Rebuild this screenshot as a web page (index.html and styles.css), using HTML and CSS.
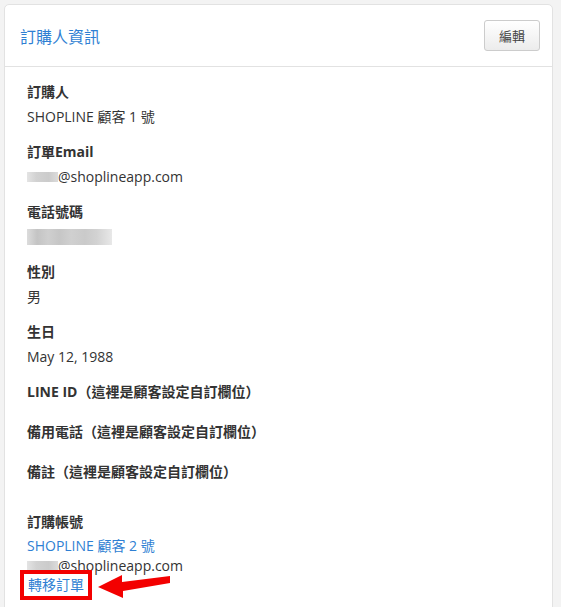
FILE: index.html
```html
<!DOCTYPE html>
<html lang="zh-Hant">
  <head>
    <meta charset="utf-8">
    <title>訂購人資訊</title>
    <link rel="stylesheet" href="styles.css">
  </head>
  <body>
    <div class="panel">
      <div class="panel-heading">
        <h3 class="panel-title">訂購人資訊</h3>
        <button class="btn">編輯</button>
      </div>
      <div class="panel-body">
        <div class="field">
          <div class="field-label">訂購人</div>
          <div class="field-value">SHOPLINE 顧客 1 號</div>
        </div>
        <div class="field">
          <div class="field-label">訂單Email</div>
          <div class="field-value"><span class="blur blur-mail"></span>@shoplineapp.com</div>
        </div>
        <div class="field">
          <div class="field-label">電話號碼</div>
          <div class="field-value"><span class="blur blur-phone"></span></div>
        </div>
        <div class="field">
          <div class="field-label">性別</div>
          <div class="field-value">男</div>
        </div>
        <div class="field">
          <div class="field-label">生日</div>
          <div class="field-value">May 12, 1988</div>
        </div>
        <div class="field">
          <div class="field-label">LINE ID（這裡是顧客設定自訂欄位）</div>
        </div>
        <div class="field">
          <div class="field-label">備用電話（這裡是顧客設定自訂欄位）</div>
        </div>
        <div class="field">
          <div class="field-label">備註（這裡是顧客設定自訂欄位）</div>
        </div>
        <div class="field field-account">
          <div class="field-label">訂購帳號</div>
          <div class="field-value"><a href="#">SHOPLINE 顧客 2 號</a></div>
          <div class="field-value"><span class="blur blur-mail"></span>@shoplineapp.com</div>
          <div class="field-action">
            <a href="#" class="highlight">轉移訂單</a>
          </div>
        </div>
      </div>
    </div>
    <svg class="arrow" width="90" height="40" viewBox="0 0 90 40">
      <polygon points="0,22 24,10 24,17 72,11 72,18 25,26 25,33" fill="#f30000"/>
    </svg>
  </body>
</html>
```

FILE: styles.css
```css
html, body {
  margin: 0;
  height: 100%;
}

body {
  background: #f3f3f3;
  font-family: "Open Sans", "Noto Sans CJK TC", sans-serif;
  font-size: 14px;
  color: #333;
  padding: 4px 0 0 4px;
  box-sizing: border-box;
  overflow: hidden;
}

a {
  color: #2f7fd3;
  text-decoration: none;
}

.panel {
  width: 549px;
  height: 700px;
  background: #fff;
  border: 1px solid #e2e2e2;
  border-radius: 5px;
  box-sizing: border-box;
}

.panel-heading {
  height: 61px;
  display: flex;
  align-items: center;
  justify-content: space-between;
  padding: 0 12px 0 15px;
  border-bottom: 1px solid #e2e2e2;
}

.panel-title {
  margin: 0;
  font-size: 16px;
  font-weight: normal;
  color: #2f7fd3;
}

.btn {
  width: 56px;
  height: 31px;
  font-family: inherit;
  font-size: 13px;
  color: #444;
  background: linear-gradient(#fff, #ececec);
  border: 1px solid #ccc;
  border-radius: 3px;
}

.panel-body {
  padding: 15px 22px 0;
}

.field {
  padding-bottom: 15px;
  line-height: 20px;
}

.field-label {
  font-weight: bold;
  margin-bottom: 5px;
}

.field-value {
  min-height: 20px;
}

.field-account {
  margin-top: 10px;
}

.field-account .field-label {
  margin-bottom: 4px;
}

.field-action {
  display: flex;
  margin-top: -6px;
}

.blur {
  display: inline-block;
  vertical-align: middle;
  height: 10px;
  background: linear-gradient(90deg, #e4e4e4 0, #d2d2d2 30%, #cbcbcb 70%, #dcdcdc 100%);
}

.blur-mail {
  width: 31px;
  margin-top: -3px;
}

.blur-phone {
  width: 85px;
  height: 16px;
  margin-top: -2px;
  background: linear-gradient(90deg, #dcdcdc 0, #c4c4c4 12%, #cfcfcf 25%, #c6c6c6 38%, #d0d0d0 52%, #cacaca 68%, #d2d2d2 82%, #e8e8e8 100%);
}

.highlight {
  margin-left: -7px;
  padding: 1px 4px;
  border: 4px solid #f30000;
  line-height: 20px;
}

.arrow {
  position: absolute;
  left: 98px;
  top: 565px;
}
```
